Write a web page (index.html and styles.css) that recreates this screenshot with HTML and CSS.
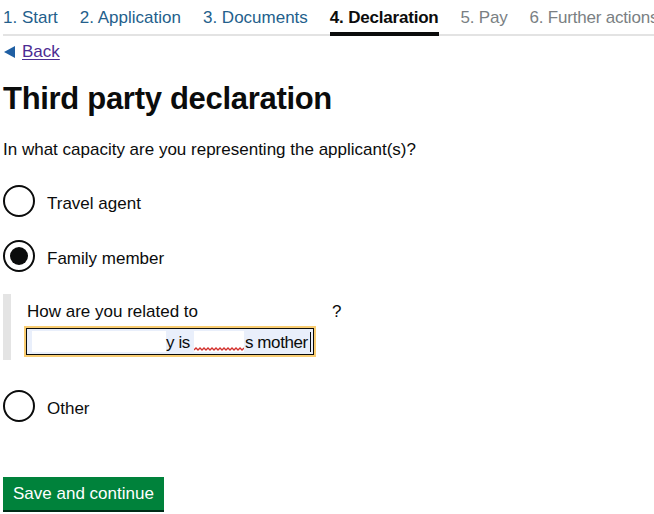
FILE: index.html
```html
<!DOCTYPE html>
<html lang="en">
<head>
<meta charset="utf-8">
<title>Third party declaration</title>
<link rel="stylesheet" href="styles.css">
</head>
<body>
<div class="page">
  <nav class="steps">
    <a class="step" href="#">1. Start</a>
    <a class="step" href="#">2. Application</a>
    <a class="step" href="#">3. Documents</a>
    <span class="step step-active">4. Declaration</span>
    <span class="step step-off">5. Pay</span>
    <span class="step step-off">6. Further actions</span>
  </nav>

  <a class="back" href="#"><span class="back-arrow"></span><span class="back-text">Back</span></a>

  <h1 class="title">Third party declaration</h1>

  <p class="question">In what capacity are you representing the applicant(s)?</p>

  <div class="radios">
    <div class="radio">
      <span class="radio-circle"></span>
      <span class="radio-label">Travel agent</span>
    </div>
    <div class="radio">
      <span class="radio-circle radio-checked"></span>
      <span class="radio-label">Family member</span>
    </div>
    <div class="conditional">
      <div class="cond-label">How are you related to<span class="cond-gap"></span>?</div>
      <div class="field">
        <span class="redact redact-a"></span><span class="field-text">y is</span><span class="redact redact-b"><svg class="squiggle" width="50" height="4" viewBox="0 0 50 4"><polyline points="0,3 2,1 4,3 6,1 8,3 10,1 12,3 14,1 16,3 18,1 20,3 22,1 24,3 26,1 28,3 30,1 32,3 34,1 36,3 38,1 40,3 42,1 44,3 46,1 48,3 50,1" fill="none" stroke="#d2302c" stroke-width="1.3"/></svg></span><span class="field-text">s mother</span><span class="caret"></span>
      </div>
    </div>
    <div class="radio">
      <span class="radio-circle"></span>
      <span class="radio-label">Other</span>
    </div>
  </div>

  <button class="btn" type="button">Save and continue</button>
</div>
</body>
</html>
```

FILE: styles.css
```css
html, body {
  margin: 0;
  padding: 0;
  background: #ffffff;
}

body {
  font-family: "Liberation Sans", Arial, sans-serif;
  font-size: 17px;
  line-height: 20px;
  color: #0b0c0c;
}

.page {
  width: 654px;
  height: 514px;
  overflow: hidden;
  padding-left: 3px;
  box-sizing: border-box;
}

.steps {
  display: flex;
  gap: 22px;
  white-space: nowrap;
  border-bottom: 2px solid #e3e3e3;
  margin-right: -40px;
}

.step {
  display: block;
  padding: 8px 0 4px;
  border-bottom: 4px solid transparent;
  color: #245f8c;
  text-decoration: none;
  margin-bottom: -2px;
}

.step-active {
  color: #0b0c0c;
  font-weight: bold;
  border-bottom-color: #0b0c0c;
  letter-spacing: -0.2px;
}

.step-off {
  color: #7a7f83;
  letter-spacing: -0.2px;
}

.back {
  display: inline-flex;
  align-items: center;
  margin-top: 6px;
  color: #4c2c92;
  text-decoration: none;
}

.back-arrow {
  width: 0;
  height: 0;
  border-top: 6px solid transparent;
  border-bottom: 6px solid transparent;
  border-right: 11px solid #1f5fa3;
  margin: 0 7px 0 1px;
}

.back-text {
  text-decoration: underline;
  text-underline-offset: 2px;
}

.title {
  margin: 18px 0 0;
  font-size: 31px;
  line-height: 36px;
  font-weight: bold;
  letter-spacing: -0.3px;
}

.question {
  margin: 23px 0 0;
}

.radios {
  margin-top: 25px;
  display: flex;
  flex-direction: column;
}

.radio {
  display: flex;
  align-items: center;
  gap: 12px;
  height: 32px;
  margin-bottom: 23px;
}

.radio-circle {
  width: 32px;
  height: 32px;
  box-sizing: border-box;
  border: 2px solid #0b0c0c;
  border-radius: 50%;
  display: flex;
  align-items: center;
  justify-content: center;
  flex: none;
}

.radio-checked::after {
  content: "";
  width: 18px;
  height: 18px;
  border-radius: 50%;
  background: #0b0c0c;
}

.radio-label {
  padding-top: 5px;
}

.conditional {
  margin: -1px 0 30px;
  border-left: 8px solid #e4e4e4;
  padding: 8px 0 5px 16px;
}

.cond-label {
  margin-bottom: 6px;
}

.cond-gap {
  display: inline-block;
  width: 134px;
}

.field {
  display: flex;
  align-items: center;
  width: 288px;
  height: 27px;
  margin-left: -1px;
  box-sizing: border-box;
  border: 1.5px solid #0b0c0c;
  outline: 2px solid #f9cd72;
  background: #e9effb;
  padding-left: 5px;
  white-space: nowrap;
  overflow: hidden;
}

.field > * {
  flex: none;
}

.redact {
  display: inline-flex;
  align-items: flex-end;
  background: #ffffff;
  height: 21px;
}

.redact-a {
  width: 134px;
}

.redact-b {
  width: 50px;
  margin: 0 1px 0 4px;
}

.squiggle {
  display: block;
  margin-bottom: 1px;
}

.field-text {
  padding-top: 2px;
  letter-spacing: -0.4px;
}

.caret {
  width: 1px;
  height: 20px;
  background: #0b0c0c;
  margin-left: 2px;
}

.btn {
  display: block;
  margin-top: 32px;
  font-family: "Liberation Sans", Arial, sans-serif;
  font-size: 17px;
  line-height: 20px;
  color: #ffffff;
  background: #00823b;
  border: 0;
  border-radius: 0;
  padding: 7px 10px 6px;
  box-shadow: 0 2px 0 #002d18;
  cursor: pointer;
}
```
